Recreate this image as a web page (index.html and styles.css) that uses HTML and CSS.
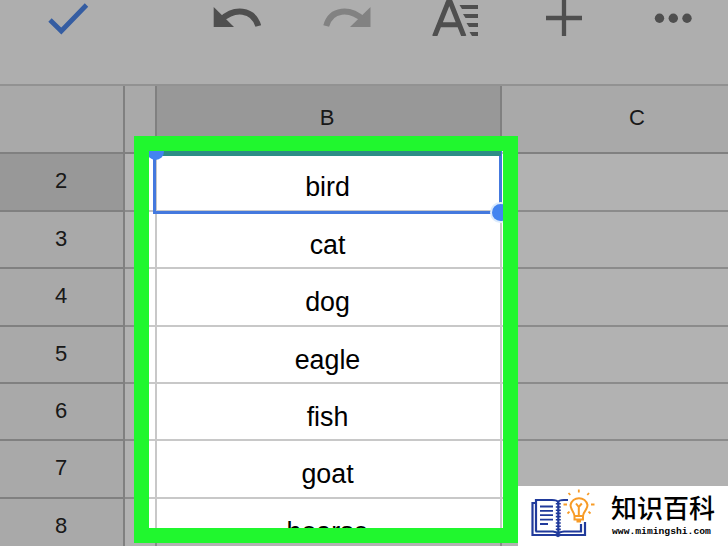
FILE: index.html
```html
<!DOCTYPE html>
<html lang="en">
<head>
<meta charset="utf-8">
<title>Spreadsheet</title>
<link rel="stylesheet" href="styles.css">
</head>
<body>
<main class="app">
  <header class="toolbar">
    <svg class="check" viewBox="0 0 44 36"><path d="M3 20 L14.300 31 L39.500 5"/></svg>
    <svg class="undo" viewBox="0 0 52 36"><path class="arrow" d="M1.700 7V27H22Z"/><path class="arc" d="M9 20C22 7.500 41 8.500 46.300 26"/></svg>
    <svg class="redo" viewBox="0 0 52 36"><path class="arrow" d="M49.500 7V27H29Z"/><path class="arc" d="M42.500 20C29 7.500 10 8.500 5.200 26"/></svg>
    <svg class="format" viewBox="0 0 48 36"><path class="letter" d="M2.500 36.500 L15.900 3 Q17.300 -1.500 18.700 3 L32 36.500 M8 24.800H27"/><path class="bars" d="M27.500 5h18.500v4H30ZM31 14h15v4H33.500ZM34.500 23h11.500v4H37ZM37.500 32h8.500v4H40Z"/></svg>
    <svg class="plus" viewBox="0 0 36 36"><path d="M0 18H36.500M18 -1V36.300"/></svg>
    <svg class="more" viewBox="0 0 38 36"><circle cx="5.500" cy="18.200" r="4.700"/><circle cx="19.300" cy="18.200" r="4.700"/><circle cx="33" cy="18.200" r="4.700"/></svg>
  </header>
  <section class="sheet">
    <div class="head"></div><div class="head"></div><div class="head selected letter-b">B</div><div class="head last">C</div>
    <div class="num selected">2</div><div class="cell"></div><div class="cell">bird</div><div class="cell last"></div>
    <div class="num">3</div><div class="cell"></div><div class="cell">cat</div><div class="cell last"></div>
    <div class="num">4</div><div class="cell"></div><div class="cell">dog</div><div class="cell last"></div>
    <div class="num">5</div><div class="cell"></div><div class="cell">eagle</div><div class="cell last"></div>
    <div class="num">6</div><div class="cell"></div><div class="cell">fish</div><div class="cell last"></div>
    <div class="num">7</div><div class="cell"></div><div class="cell">goat</div><div class="cell last"></div>
    <div class="num">8</div><div class="cell"></div><div class="cell">hoarse</div><div class="cell last"></div>
  </section>
  <div class="spotlight">
    <div class="selection"></div>
    <div class="edge"></div>
    <div class="handle start"></div>
    <div class="handle end"></div>
  </div>
  <aside class="brand">
    <svg class="book" viewBox="0 0 66 46">
      <g class="navy">
        <path d="M5.500 6H2.500V38H26L28 39L30 38H55V25M6 34.500V3H22Q27 3 28 5Q29 3 34 3H38M5.500 34.500H23Q27 35 28 37Q29 35 34 34.500H51V27"/>
        <path class="thin" d="M10 9.500H23M10 13.800H23M10 18.200H23M10 22.600H23M10 27H18"/>
        <path d="M28.300 4V37"/>
        <path class="spiral" d="M28.300 6V35"/>
      </g>
      <g class="gold">
        <path d="M44.500 19C44 14 40.500 13 40.500 8A8.700 8.700 0 0 1 57.500 8C57.500 13 53.500 14 53 19ZM44.500 19V22.500H53V19M46.500 24.500H51M46 6.500L48.800 10L51.800 6.500M48.800 10V18"/>
        <path class="thin" d="M48.800 -7.500V-4.500M38.500 -4L40.300 -2M59 -4L57.300 -2M33.500 7.500H37M61 7.500H64.500M37.500 16.500L39.500 14.700M60.500 16.500L58.500 14.700"/>
      </g>
    </svg>
    <div class="brand-text"><div class="brand-name">知识百科</div><div class="brand-url">www.mimingshi.com</div></div>
  </aside>
</main>
</body>
</html>
```
FILE: styles.css
```css
* { box-sizing: border-box; }
body { margin: 0; }
.app {
  position: relative;
  width: 728px;
  height: 546px;
  overflow: hidden;
  background: #fff;
  font-family: "Liberation Sans", Arial, sans-serif;
  color: #000;
}
.toolbar {
  height: 86px;
  display: flex;
  align-items: flex-start;
  background: #fafafa;
  border-bottom: 2px solid #d2d2d2;
}
.toolbar svg { height: 36px; flex: none; fill: none; stroke: #727272; overflow: hidden; }
.toolbar .check { width: 44px; margin-left: 47px; stroke: #4c86e8; stroke-width: 4.8; }
.toolbar .undo { width: 52px; margin-left: 121px; }
.toolbar .redo { width: 52px; margin-left: 57px; stroke: #bababa; }
.toolbar .arc { stroke-width: 6; }
.toolbar .arrow { fill: #727272; stroke: none; }
.toolbar .redo .arrow { fill: #bababa; }
.toolbar .format { width: 48px; margin-left: 59px; }
.toolbar .letter { stroke-width: 5; }
.toolbar .bars { fill: #727272; stroke: none; }
.toolbar .plus { width: 36px; margin-left: 66px; stroke-width: 4.3; }
.toolbar .more { width: 38px; margin-left: 72px; fill: #727272; stroke: none; }

.sheet {
  display: grid;
  grid-template-columns: 125px 32px 345px 270px;
  grid-template-rows: 68px 58px 57px 58px 57px 57px 58px 57px;
}
.sheet > div {
  display: flex;
  justify-content: center;
  border-right: 2px solid #c8c8c8;
  border-bottom: 2px solid #c8c8c8;
  overflow: hidden;
}
.sheet .head, .sheet .num {
  background: #f2f2f2;
  border-color: #b8b8b8;
  color: #252525;
  font-size: 22px;
}
.sheet .head { line-height: 64px; }
.sheet .head.letter-b { padding-right: 3px; }
.sheet .num { line-height: 54px; padding-right: 1px; }
.sheet .selected { background: #dadada; }
.sheet .cell { font-size: 26.8px; line-height: 67px; padding-right: 2px; }
.sheet .last { border-right: 0; }

.spotlight {
  position: absolute;
  left: 134px;
  top: 136px;
  width: 384px;
  height: 407px;
  border: 15px solid #20f72e;
  overflow: hidden;
  box-shadow: 0 0 0 800px rgba(0, 0, 0, .3);
}
.selection {
  position: absolute;
  left: 4px;
  top: 0;
  width: 349px;
  height: 63px;
  border: 3px solid #4479de;
}
.edge { position: absolute; left: 6px; top: 0; width: 346px; height: 5px; background: #2d8d86; }
.handle { position: absolute; width: 17px; height: 17px; border-radius: 50%; background: #4384f0; }
.handle.start { left: -2px; top: -8px; }
.handle.end { left: 343px; top: 53px; box-shadow: 0 0 0 2px #dcebfc; }

.brand {
  position: absolute;
  right: 0;
  bottom: 0;
  width: 210px;
  height: 60px;
  display: flex;
  background: #fff;
}
.book { width: 66px; height: 46px; margin: 11px 0 0 12px; flex: none; overflow: visible; fill: none; }
.navy { stroke: #203a9b; stroke-width: 2.2; }
.gold { stroke: #f79b27; stroke-width: 2; }
.thin { stroke-width: 1.8; }
.spiral { stroke-width: 5; stroke-dasharray: 1.6 1.6; }
.brand-text { margin: 6px 0 0 15px; white-space: nowrap; }
.brand-name { font: 500 26px/30px "Noto Sans CJK SC", sans-serif; }
.brand-url { font: bold 9.7px/12px "Liberation Mono", monospace; margin: 4px 0 0 1px; }
```
